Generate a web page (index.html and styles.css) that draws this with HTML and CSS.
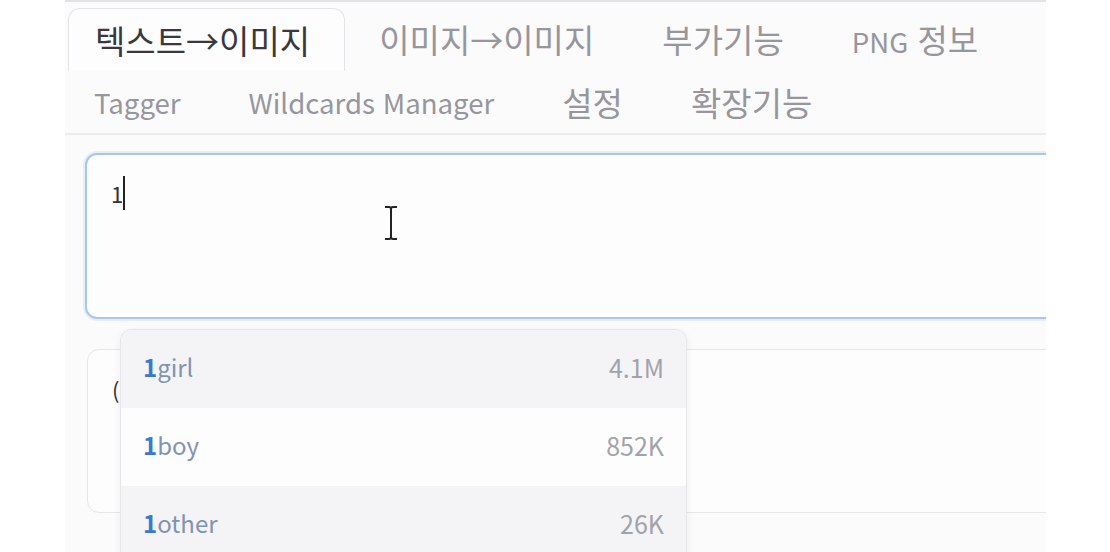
FILE: index.html
```
<!DOCTYPE html>
<html lang="ko">
<head>
    <meta charset="UTF-8">
    <title>텍스트→이미지</title>
    <link rel="stylesheet" href="styles.css">
</head>
<body>

<div class="app">
    <div class="tabs">
        <div class="tab-row">
            <div class="tab active first">텍스트→이미지</div>
            <div class="tab">이미지→이미지</div>
            <div class="tab">부가기능</div>
            <div class="tab"><span class="latin">PNG</span> 정보</div>
        </div>
        <div class="tab-row">
            <div class="tab first latin">Tagger</div>
            <div class="tab latin">Wildcards Manager</div>
            <div class="tab">설정</div>
            <div class="tab">확장기능</div>
        </div>
    </div>

    <div class="prompt focused">
        <span class="prompt-text">1</span><span class="caret"></span>
    </div>

    <div class="prompt negative">
        <span class="prompt-text">(</span>
    </div>

    <ul class="suggest">
        <li class="shade"><span class="tag"><b>1</b>girl</span><span class="count">4.1M</span></li>
        <li><span class="tag"><b>1</b>boy</span><span class="count">852K</span></li>
        <li class="shade"><span class="tag"><b>1</b>other</span><span class="count">26K</span></li>
    </ul>

    <svg class="ibeam" width="16" height="36" viewBox="0 0 16 36">
        <path d="M2 2 H6 Q8 2 8 4 V32 Q8 34 10 34 H14 M14 2 H10 Q8 2 8 4 M8 32 Q8 34 6 34 H2" fill="none" stroke="#222" stroke-width="2"/>
    </svg>
</div>

</body>
</html>
```

FILE: styles.css
```
body {
    margin: 0;
    background: #ffffff;
    font-family: "Noto Sans CJK KR", "Noto Sans", sans-serif;
}
.app {
    position: relative;
    margin-left: 65px;
    width: 981px;
    height: 550px;
    background: #fbfbfc;
    border-top: 2px solid #e3e3e7;
    overflow: hidden;
}
.tabs {
    padding: 6px 0 0 3px;
    border-bottom: 2px solid #ececef;
}
.tab-row {
    display: flex;
}
.tab {
    height: 62px;
    line-height: 62px;
    padding: 0 34px;
    font-size: 33px;
    color: #96969c;
    white-space: nowrap;
}
.latin {
    font-size: 27.6px;
}
.tab.first {
    padding-left: 26px;
}
.tab.active {
    color: #38383d;
    background: #fdfdfd;
    border: 1px solid #e4e4e8;
    border-bottom: none;
    border-radius: 12px 12px 0 0;
}
.prompt {
    width: 1000px;
    height: 166px;
    margin: 18px 0 0 20px;
    background: #fdfdfe;
    border: 1px solid #e8e6e8;
    border-radius: 12px;
    padding: 18px 24px;
    box-sizing: border-box;
    display: flex;
    align-items: flex-start;
}
.prompt.focused {
    border: 2px solid #a9c7e6;
    box-shadow: 0 0 0 2px #e6eff9;
}
.prompt.negative {
    height: 164px;
    margin-top: 30px;
    margin-left: 22px;
    padding-top: 20px;
}
.prompt-text {
    font-size: 22px;
    line-height: 40px;
    color: #333;
}
.caret {
    width: 2px;
    height: 34px;
    margin-top: 3px;
    background: #222;
}
.suggest {
    position: absolute;
    left: 55px;
    top: 327px;
    width: 565px;
    margin: 0;
    padding: 0;
    list-style: none;
    background: #fdfdfd;
    border: 1px solid #e6e6ea;
    border-bottom: none;
    border-radius: 12px 12px 0 0;
    box-shadow: 0 2px 8px rgba(0, 0, 0, 0.06);
    overflow: hidden;
}
.suggest li {
    display: flex;
    justify-content: space-between;
    align-items: center;
    height: 73px;
    padding: 0 22px 5px 22px;
    font-size: 24px;
}
.suggest li.shade {
    background: #f4f4f6;
}
.tag {
    color: #8093b0;
}
.tag b {
    color: #3b79cf;
    font-weight: 700;
}
.count {
    color: #a2a2aa;
    font-size: 25px;
}
.ibeam {
    position: absolute;
    left: 318px;
    top: 203px;
}
```
